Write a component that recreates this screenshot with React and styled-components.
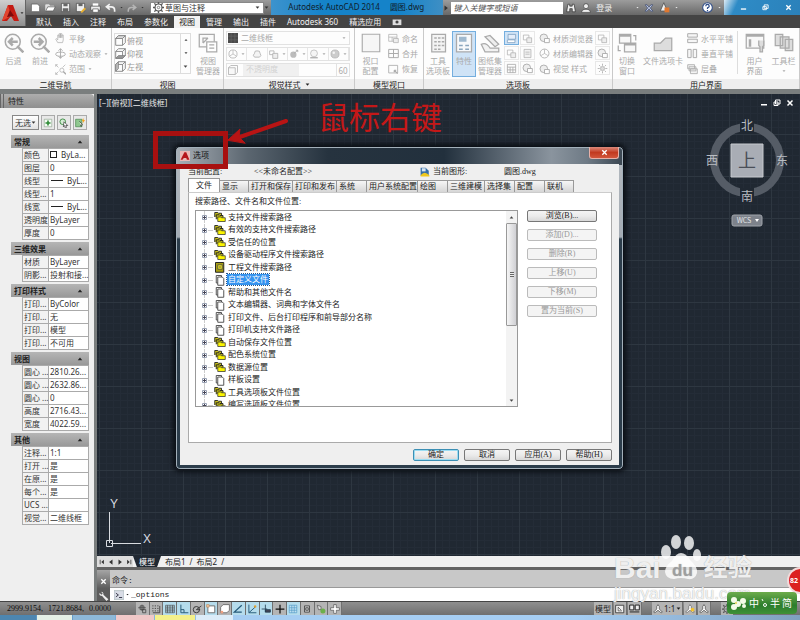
import React from 'react';
import styled, { createGlobalStyle, css } from 'styled-components';

const GlobalStyle = createGlobalStyle`
  * { box-sizing: border-box; }
  body {
    margin: 0;
    overflow: hidden;
    background: #efefef;
    font-family: "Noto Sans", "Noto Sans CJK SC", sans-serif;
    font-size: 8px;
    line-height: 10px;
    color: #333;
  }
  button, input, select {
    margin: 0;
    padding: 0;
    border: 0;
    border-radius: 0;
    background: none;
    font: inherit;
    color: inherit;
    appearance: none;
  }
  ul { margin: 0; padding: 0; list-style: none; }
  svg { display: block; flex: none; }
`;

/* ---------- icons ---------- */

const shapes = {
  new: <path d="M2 3h9l3 3v8H2z" fill="#fff" stroke="#555" />,
  open: <><path d="M1 13V4h5l1 2h6v2" fill="#ddd" stroke="#eee" /><path d="M1 13l3-6h11l-3 6z" fill="#fff" stroke="#555" /></>,
  save: <><path d="M2 2h12v12H2z" fill="#eee" stroke="#444" /><path d="M5 2h6v4H5zM4 9h8v5H4z" fill="#666" /></>,
  saveas: <><path d="M2 2h12v12H2z" fill="#eee" stroke="#444" /><path d="M5 2h6v4H5z" fill="#666" /><path d="M8 14l6-6 2 2-6 6z" fill="#e8b030" /></>,
  print: <><path d="M4 2h8v4H4z" fill="#fff" /><path d="M1 6h14v6H1z" fill="#eee" stroke="#444" /><path d="M4 10h8v5H4z" fill="#fff" stroke="#555" /></>,
  undo: <path d="M7 3L2 7l5 4M2 7h7q5 0 5 5v2" fill="none" stroke="#f2f2f2" strokeWidth="2.4" />,
  redo: <path d="M9 3l5 4-5 4M14 7H7q-5 0-5 5v2" fill="none" stroke="#b5b5b5" strokeWidth="2.4" />,
  gear: <><circle cx="8" cy="8" r="5" fill="none" stroke="#555" strokeWidth="1.5" /><circle cx="8" cy="8" r="1.8" fill="none" stroke="#555" /><path d="M8 0v3M8 13v3M0 8h3M13 8h3M2 2l2 2M12 12l2 2M14 2l-2 2M4 12l-2 2" stroke="#555" strokeWidth="2" /></>,
  binoculars: <path d="M3 2h3v3h4V2h3l2 12h-5V9H6v5H1z" fill="#eee" stroke="#222" />,
  user: <><circle cx="8" cy="5" r="4" fill="#eee" stroke="#333" /><path d="M1 15q0-5 7-5t7 5z" fill="#eee" stroke="#333" /></>,
  exchange: <path d="M2 3h3l3 4 3-4h3l-4 5 4 5h-3L8 9l-3 4H2l4-5z" fill="#d8e0f2" stroke="#26386c" />,
  alert: <><path d="M7 1l5 12H2z" fill="#eee" stroke="#444" /><path d="M8 8h7v7H8z" fill="#e07830" /></>,
  help: <><circle cx="8" cy="8" r="7" fill="#fff" stroke="#2c4a86" strokeWidth="1.5" /><path d="M5.5 6q0-2.5 2.5-2.5T10.5 6Q10.5 7.5 8 8.5v1.500M8 11.5v2" fill="none" stroke="#2c4a86" strokeWidth="1.8" /></>,
  back: <><circle cx="7" cy="7" r="6" fill="#fafafa" stroke="currentColor" strokeWidth="1.2" /><path d="M10.5 10.5l5 5" stroke="currentColor" strokeWidth="2" /><path d="M11 7H4m3-3L4 7l3 3" fill="none" stroke="currentColor" strokeWidth="2" /></>,
  forward: <><circle cx="7" cy="7" r="6" fill="#fafafa" stroke="currentColor" strokeWidth="1.2" /><path d="M10.5 10.5l5 5" stroke="currentColor" strokeWidth="2" /><path d="M3 7h7M7 4l3 3-3 3" fill="none" stroke="currentColor" strokeWidth="2" /></>,
  hand: <path d="M4 14L1 9l1-1 2 2V3h2v4-6h2v6-6h2v6-4h2v7l-1 4z" fill="#fafafa" stroke="currentColor" />,
  orbit: <><ellipse cx="8" cy="9" rx="7" ry="3" fill="none" stroke="currentColor" strokeWidth="1.3" /><path d="M8 1v14M5 4l3-3 3 3M5 12l3 3 3-3" fill="none" stroke="currentColor" strokeWidth="1.3" /></>,
  extents: <><path d="M1 1l4 4M1 4V1h3M15 1l-4 4M1 15l4-4M1 12v3h3" stroke="currentColor" fill="none" /><circle cx="10" cy="9" r="3" fill="none" stroke="currentColor" /><path d="M12 11l4 4" stroke="currentColor" strokeWidth="2" /></>,
  cubeTop: <><path d="M1 5h10v10H1zM1 5l4-4h10v10l-4 4M11 5l4-4" fill="none" stroke="#777" strokeWidth="1.2" /><path d="M1 5l4-4h10l-4 4z" fill="#ddd" stroke="#777" /></>,
  cubeBottom: <><path d="M1 5h10v10H1zM1 5l4-4h10v10l-4 4M11 5l4-4" fill="none" stroke="#777" strokeWidth="1.2" /><path d="M1 15l4-4h10l-4 4z" fill="#999" stroke="#777" /></>,
  cubeLeft: <><path d="M1 5h10v10H1zM1 5l4-4h10v10l-4 4M11 5l4-4" fill="none" stroke="#777" strokeWidth="1.2" /><path d="M1 5l4-4v10l-4 4z" fill="#bbb" stroke="#777" /></>,
  viewManager: <><path d="M1 1h12v10H1z" fill="#fafafa" stroke="currentColor" /><path d="M4 8V4h4M4 8l4-4" fill="none" stroke="currentColor" /><path d="M7 7h8v8H7z" fill="#fff" stroke="currentColor" /><path d="M9 9.5h4M9 12h4" stroke="currentColor" /></>,
  dark: <><path d="M0 0h16v16H0z" fill="#4a4a4a" /><path d="M5 0v16M11 0v16M0 5h16M0 11h16" stroke="#686868" /></>,
  globe: <><circle cx="8" cy="8" r="6.5" fill="none" stroke="currentColor" strokeWidth="1.2" /><path d="M8 8V2M8 8l5 3M8 8l-5 3" stroke="currentColor" /></>,
  cloud: <path d="M4 13q-4-3 0-6 0-5 4-4 5-1 5 4 3 4-1 6z" fill="#f4f4f4" stroke="currentColor" strokeWidth="1.2" />,
  boxes: <><path d="M1 3h7v6H1z" fill="none" stroke="currentColor" strokeWidth="1.2" /><path d="M6 7h8v8H6z" fill="#eee" stroke="currentColor" strokeWidth="1.2" /></>,
  sphere: <><circle cx="8" cy="8" r="6.5" fill="#ccc" stroke="currentColor" /><circle cx="6" cy="6" r="2" fill="#f5f5f5" /></>,
  shade: <><circle cx="8" cy="7" r="5.5" fill="#f5f5f5" stroke="currentColor" /><path d="M2 14h12" stroke="currentColor" strokeWidth="2" /></>,
  bulb: <><circle cx="7" cy="9" r="5" fill="#bbb" /><path d="M8 7l6-5M11 2h3v3" fill="none" stroke="currentColor" strokeWidth="1.4" /></>,
  cube: <><path d="M2 5h9v9H2z" fill="#f8f8f8" stroke="currentColor" /><path d="M2 5l3-3h9v9l-3 3" fill="none" stroke="currentColor" /></>,
  square: <path d="M1 1h14v14H1z" fill="#f6f6f6" stroke="currentColor" strokeWidth=".9" />,
  named: <><path d="M1 2h12v10H1zM1 6h12M6 6v6" fill="none" stroke="currentColor" /><path d="M8 8h7v6H8z" fill="#eee" stroke="currentColor" /></>,
  join: <path d="M1 2h14v12H1zM1 8h14M8 2v12" fill="none" stroke="currentColor" strokeWidth="1.4" />,
  restore: <><path d="M1 2h13v11H1z" fill="none" stroke="currentColor" strokeWidth="1.2" /><path d="M9 9l5 5M9 9v3M9 9h3" stroke="currentColor" strokeWidth="1.5" /></>,
  palette: <><path d="M3 1h11v14H3z" fill="#f4f4f4" stroke="currentColor" /><path d="M5 4h2M8 4h2M11 4h2M5 7h2M8 7h2M11 7h2M5 10h2M8 10h2M11 10h2M5 13h2M8 13h2" stroke="currentColor" strokeWidth="1.3" /></>,
  props: <><path d="M2 1h12v14H2z" fill="#f7f9fb" stroke="currentColor" /><path d="M4 3h6v4H4z" fill="#9fb9cf" /><path d="M4 10h3M9 10h3M4 13h3M9 13h3" stroke="#8aa6be" strokeWidth="1.3" /></>,
  sheets: <><path d="M4 3l8 8 3-2-7-7z" fill="#eee" stroke="currentColor" /><path d="M1 9q4-2 7 3h7v3H4z" fill="#f2f2f2" stroke="currentColor" /></>,
  command: <><path d="M3 2h11v7H3z" fill="#e4eefa" stroke="#6f93b8" /><path d="M2 10h11v4H2z" fill="#fff" stroke="#6f93b8" /></>,
  small: <><path d="M2 3h8v7H2z" fill="none" stroke="currentColor" /><path d="M7 7h7v7H7z" fill="#eee" stroke="currentColor" /></>,
  page: <><path d="M3 2h10v12H3z" fill="#f2f2f2" stroke="currentColor" /><path d="M5 6h6M5 9h6" stroke="currentColor" /></>,
  calc: <path d="M2 2h12v12H2zM2 6h12M2 10h12M6 6v8M10 6v8" fill="none" stroke="currentColor" strokeWidth="1.2" />,
  material: <><circle cx="7" cy="7" r="5.5" fill="#eee" stroke="currentColor" strokeWidth="1.3" /><path d="M8 8h7v6H8z" fill="#fff" stroke="currentColor" strokeWidth="1.3" /></>,
  sun: <><circle cx="8" cy="8" r="3" fill="#ddd" stroke="currentColor" /><path d="M8 1v3M8 12v3M1 8h3M12 8h3M3 3l2 2M11 11l2 2M13 3l-2 2M3 13l2-2" stroke="currentColor" strokeWidth="1.2" /></>,
  switchWin: <><path d="M2 1h9v7H2zM6 8h9v7H6z" fill="#f8f8f8" stroke="currentColor" /><path d="M2 2h9M6 9h9" stroke="currentColor" strokeWidth="2" /><path d="M13 2h2v4M3 14H1v-4" fill="none" stroke="currentColor" /></>,
  folderTab: <path d="M1 14V8h5l4-4h5v10z" fill="#ddd" stroke="currentColor" />,
  tileH: <path d="M1 1h14v5H1zM1 9h14v5H1z" fill="#f6f6f6" stroke="currentColor" strokeWidth="1.4" />,
  tileV: <path d="M1 2h5v12H1zM9 2h5v12H9z" fill="#f6f6f6" stroke="currentColor" strokeWidth="1.4" />,
  cascade: <path d="M1 1h10v6H1zM3 4h10v6H3zM5 7h10v7H5z" fill="#f4f4f4" stroke="currentColor" strokeWidth="1.2" />,
  uiPanel: <><path d="M1 1h14v11H1z" fill="#f8f8f8" stroke="currentColor" /><path d="M1 2h14M4 5v6" stroke="currentColor" strokeWidth="2" /><path d="M11 6v4l1 1v4h2v-4l1-1V6" fill="#ddd" stroke="currentColor" /></>,
  bars: <path d="M1 1h6v9H1zM5 3h7v9H5zM9 5h6v9H9z" fill="#ddd" stroke="currentColor" />,
  folder: <><path d="M1 8V2h4l1 1h4v4" fill="#c9c21a" stroke="#222" strokeWidth="1.2" /><path d="M3 11V5h4l1 1h4v3" fill="#b8b018" stroke="#222" strokeWidth="1.2" /><path d="M5 14V8h4l1 1h5v5z" fill="#fbf400" stroke="#333" /></>,
  book: <><path d="M2 2h11v13H2z" fill="#a89f14" stroke="#222" strokeWidth="1.3" /><path d="M5 5h6v6H5z" fill="#e9e02c" stroke="#444" /><path d="M7 8h2" stroke="#222" /></>,
  files: <><path d="M3 2h7v10H3z" fill="#fff" stroke="#444" strokeWidth="1.2" /><path d="M5 4h6l2 2v9H5z" fill="#fff" stroke="#444" strokeWidth="1.2" /></>,
  drawing: <><path d="M1 1h8l5 5v8H1z" fill="#356ea8" /><path d="M3 2h6v5H3z" fill="#d6e6f2" /><path d="M1 13q6-8 14 0v2H1z" fill="#f0c81c" /></>,
  logo: <><path d="M0 0h16v16H0z" fill="#e9b9b6" /><path d="M7 2h3l5 12h-4l-1-3H6l-2 3H1z" fill="#b5151a" /></>,
  plusPick: <><path d="M2 2h12v12H2z" fill="#f4fbf4" stroke="#8ba08b" /><path d="M8 4v8M4 8h8" stroke="#2c8a34" strokeWidth="2.5" /></>,
  select: <><circle cx="6" cy="6" r="4.5" fill="#d4ecd4" stroke="#3d8d44" strokeWidth="1.5" /><path d="M8 6l6 6h-3l1 3-2 1-1-4-2 2z" fill="#fff" stroke="#222" /></>,
  quick: <><path d="M1 2h10v12H1z" fill="#90c890" stroke="#3d7d44" /><path d="M7 5l5 6h-3l1 3" fill="#fff" stroke="#222" /><path d="M13 0l-2 5h2l-1 4 4-6h-2z" fill="#f4a51c" /></>,
  infer: <path d="M8 1v10M2 6h12M5 3h6v6H5zM9 9h5v5H9z" fill="none" stroke="#444" strokeWidth="1.3" />,
  snap: <path d="M2 3h2M6 3h2M10 3h2M2 7h2M6 7h2M10 7h2M2 11h2M6 11h2M10 11h2M14 3v11H3" fill="none" stroke="#444" strokeWidth="1.5" />,
  grid: <path d="M1 2h14v12H1zM1 5h14M1 8h14M1 11h14M4 2v12M8 2v12M12 2v12" fill="none" stroke="#444" />,
  ortho: <path d="M3 1v13h12M3 9h5v5" fill="none" stroke="#2d5f7c" strokeWidth="1.6" />,
  polar: <><circle cx="7" cy="9" r="5" fill="none" stroke="#333" strokeWidth="1.5" /><path d="M7 9l8-6M7 9h6" stroke="#333" strokeWidth="1.4" /></>,
  osnap: <><path d="M3 3h11v11H3z" fill="#fff" stroke="#666" strokeWidth="1.4" /><path d="M1 1h4v4H1z" fill="#f6caa8" stroke="#b85" /></>,
  osnap3d: <><path d="M5 1h10v9l-4 4H1V5z" fill="#fff" stroke="#555" strokeWidth="1.2" /><path d="M1 11h4v4H1z" fill="#f0a080" /></>,
  angle: <path d="M14 2L2 13h12" fill="none" stroke="#245a7a" strokeWidth="2" />,
  ducs: <><path d="M3 1v13h12M3 14l10-9" fill="none" stroke="#245a7a" strokeWidth="1.5" /><circle cx="13" cy="4" r="2" fill="#e0a030" /></>,
  dyn: <path d="M7 1v12M1 8h9M7 9h8v4H7z" fill="#445" stroke="#223c50" strokeWidth="1.3" />,
  plus: <path d="M8 1v14M1 8h14" stroke="#111" strokeWidth="2" />,
  transparent: <path d="M2 2h12v12H2zM2 6h12M2 10h12M6 2v12M10 2v12" fill="#bfe0f2" stroke="#4c96c4" />,
  quickProps: <path d="M4 3h8v10H4zM6 6h4v4H6z" fill="#ccc" stroke="#333" strokeWidth="1.2" />,
  cycle: <><path d="M2 2l6 2v5H4z" fill="#ddd" stroke="#444" /><circle cx="11" cy="11" r="4" fill="#6bb04a" /></>,
  monitor: <path d="M6 1h4v5h5v4h-5v5H6v-5H1V6h5z" fill="#fff" stroke="#444" />,
  layout: <><path d="M1 2h13v12H1z" fill="#eee" stroke="#333" strokeWidth="1.3" /><path d="M5 5v6h6M5 5l5 5" stroke="#333" fill="none" /></>,
  views: <path d="M1 3h6v7H1zM9 3h6v7H9zM1 13h14" fill="#eee" stroke="#222" strokeWidth="1.4" />,
  person: <path d="M8 1l2 3v4l5 5-2 1-5-4-5 4-2-1 5-5V4z" fill="#fff" stroke="#333" />,
  personSun: <><path d="M8 1l2 3v4l5 5-2 1-5-4-5 4-2-1 5-5V4z" fill="#fff" stroke="#555" /><circle cx="12" cy="9" r="3" fill="#f0c030" /></>,
  wrench: <path d="M3 1l3 3-2 2-3-3q-2 5 4 5l7 8 3-3-8-7q1-5-4-5z" fill="#eee" />,
  prompt: <><path d="M0 1h16v14H0z" fill="#d9dde6" stroke="#9aa" /><path d="M3 5l4 3-4 3M8 12h5" fill="none" stroke="#334" strokeWidth="1.5" /></>,
  min: <path d="M2 10h12v3H2z" fill="#fff" />,
  max: <path d="M5 2h9v8H5zM2 6h8v7H2z" fill="none" stroke="#fff" strokeWidth="2" />,
  close: <path d="M3 3l10 10M13 3L3 13" stroke="#fff" strokeWidth="3" />,
  record: <><path d="M1 4h14v9H1z" fill="#ddd" /><circle cx="8" cy="8" r="2.5" fill="#444" /></>,
  caret: <path d="M2 5h12l-6 7z" fill="currentColor" />,
  caretUp: <path d="M2 11h12L8 4z" fill="currentColor" />,
  caretRight: <path d="M4 1v14l9-7z" fill="currentColor" />,
  caretLeft: <path d="M12 1v14L3 8z" fill="currentColor" />,
  first: <path d="M13 2v12L6 8zM2 2h2v12H2z" fill="currentColor" />,
  last: <path d="M3 2v12l7-6zM12 2h2v12h-2z" fill="currentColor" />,
};

const Icon = ({ name, size = 10 }) => (
  <svg width={size} height={size} viewBox="0 0 16 16" aria-hidden="true">{shapes[name]}</svg>
);

/* ---------- page ---------- */

const Page = styled.div`
  position: relative;
  display: flex;
  flex-direction: column;
  height: 100vh;
  overflow: hidden;
  white-space: nowrap;
`;

const Header = styled.header`
  position: relative;
  background: #444;
`;

const TitleBar = styled.div`
  display: flex;
  align-items: center;
  height: 15px;
  padding-left: 30px;
  background: linear-gradient(#9c9c9c, #686868);
`;

const AppButton = styled.button`
  position: absolute;
  left: 0;
  top: 0;
  z-index: 2;
  display: flex;
  align-items: center;
  gap: 1px;
  width: 26px;
  height: 26px;
  padding-left: 2px;
  background: linear-gradient(#d0d0d0, #8e8e8e);
  border-right: 1px solid #666;
`;

const QuickBar = styled.div`
  display: flex;
  align-items: center;
  justify-content: space-between;
  width: 116px;
  padding-right: 2px;
  color: #333;
`;

const ToolButton = styled.button`
  display: flex;
  align-items: center;
`;

const WorkspaceBox = styled.label`
  display: flex;
  align-items: center;
  gap: 1px;
  width: 114px;
  height: 12px;
  padding: 0 3px 0 2px;
  margin-left: 4px;
  background: #fff;
  border: 1px solid #888;
`;

const FlatSelect = styled.select`
  flex: 1;
  min-width: 0;
  height: 10px;
  line-height: 10px;
`;

const DocTitle = styled.div`
  flex: 174 1 0;
  display: flex;
  justify-content: center;
  gap: 10px;
  height: 15px;
  margin-left: 2px;
  padding-right: 2px;
  line-height: 14px;
  color: #10202c;
  background: linear-gradient(90deg, #3d93cd, #1583c9 30%, #1583c9 75%, #3f8fc4);
`;

const SearchInput = styled.input`
  flex: 112 1 0;
  min-width: 0;
  height: 12px;
  padding-left: 2px;
  background: #fff;
  font-style: italic;
  margin-left: 2px;
  &::placeholder { color: #555; opacity: 1; }
`;

const AccountBar = styled.div`
  flex: 158 1 0;
  display: flex;
  align-items: center;
  gap: 5px;
  padding: 0 3px;
  color: #eee;
`;

const Spacer = styled.span`
  flex: 1;
`;

const WindowButtons = styled.div`
  display: flex;
  justify-content: space-around;
  align-items: center;
  width: 76px;
  height: 15px;
  padding-left: 8px;
  background: linear-gradient(115deg, #dbeaf4, #2e8bc6 18%, #2b81ba);
`;

const Menu = styled.nav`
  display: flex;
  align-items: flex-end;
  gap: 1px;
  height: 13px;
  padding-left: 31px;
  color: #f2f2f2;
`;

const MenuTab = styled.button`
  height: 12px;
  padding: 0 5px;
  line-height: 12px;
  ${({ $active }) => $active && css`
    color: #222;
    background: #f2f2f2;
  `}
`;

/* ---------- ribbon ---------- */

const Ribbon = styled.div`
  display: grid;
  grid-template-columns: 112fr 112fr 131fr 69fr 189fr 187fr;
  height: 61px;
  background: #fdfdfd;
`;

const Panel = styled.section`
  display: flex;
  flex-direction: column;
  min-width: 0;
  border-right: 1px solid #c9c9c9;
`;

const PanelBody = styled.div`
  flex: 1;
  display: flex;
  gap: ${({ $tight }) => ($tight ? 2 : 4)}px;
  padding: 3px 2px 2px;
  color: #aaa;
  overflow: hidden;
`;

const PanelTitle = styled.h2`
  display: flex;
  justify-content: center;
  align-items: center;
  gap: 4px;
  height: 12px;
  margin: 0;
  font-size: 8px;
  font-weight: 400;
  line-height: 11px;
  color: #222;
  background: #eee;
  border-bottom: 1px solid #ccc;
`;

const BigButton = styled.button`
  display: flex;
  flex-direction: column;
  align-items: center;
  flex: none;
  gap: 3px;
  width: ${({ $w }) => $w || 24}px;
  padding-top: 2px;
  ${({ $active }) => $active && css`
    background: #cfe3f6;
    outline: 1px solid #74aede;
    outline-offset: -1px;
  `}
`;

const IconColumn = styled.div`
  display: flex;
  flex-direction: column;
  justify-content: space-around;
  flex: none;
`;

const RowButton = styled.button`
  display: flex;
  align-items: center;
  gap: 3px;
  height: 14px;
`;

const ViewList = styled.div`
  flex: 1;
  display: flex;
  height: 41px;
  margin-top: 2px;
  border: 1px solid #ddd;
  color: #999;
`;

const ViewItems = styled.ul`
  flex: 1;
  display: flex;
  flex-direction: column;
  justify-content: space-around;

  ${RowButton} { height: 13px; gap: 1px; }
`;

const ViewScroll = styled.div`
  display: flex;
  flex-direction: column;
  justify-content: space-around;
  align-items: center;
  width: 10px;
  border-left: 1px solid #ddd;
  color: #444;
`;

const StyleTools = styled.div`
  flex: 1;
  display: flex;
  flex-direction: column;
  gap: 2px;
  padding-right: 2px;
`;

const StyleRow = styled.div`
  display: flex;
  align-items: center;
  height: 14px;
  border: 1px solid #e2e2e2;
`;

const StyleSelect = styled(StyleRow).attrs({ as: 'label' })`
  gap: 3px;
  padding: 0 3px 0 1px;
`;

const StyleButton = styled.button`
  flex: 1;
  display: flex;
  align-items: center;
  justify-content: center;
  gap: 3px;
  height: 12px;
  border-right: 1px solid #e6e6e6;
`;

const OpacityLabel = styled.label`
  flex: 1;
  height: 12px;
  margin-left: 4px;
  padding-left: 3px;
  color: #d2d2d2;
  background: linear-gradient(90deg, #f0f0f0 60%, #fdfdfd 60%);
`;

const OpacityInput = styled.input`
  width: 13px;
  height: 12px;
  border-left: 1px solid #e2e2e2;
  text-align: center;
`;

const SmallGrid = styled.div`
  display: grid;
  grid-template-columns: repeat(${({ $cols }) => $cols}, 15px);
  grid-template-rows: repeat(3, 14px);
  gap: 1px;
  flex: none;
`;

const SmallButton = styled.button`
  display: flex;
  align-items: center;
  justify-content: center;
  border: 1px solid ${({ $active }) => ($active ? '#74aede' : '#e8e8e8')};
  background: ${({ $active }) => ($active ? '#cfe3f6' : 'transparent')};
`;

const Divider = styled.span`
  width: 1px;
  height: 43px;
  background: #ddd;
`;

/* ---------- properties palette ---------- */

const Body = styled.div`
  flex: 1;
  display: flex;
  min-height: 0;
  border-top: 5px solid #7a7e7e;
  background: #7a7e7e;
`;

const Palette = styled.aside`
  width: 94px;
  flex: none;
  margin-right: 3px;
  background: #efefef;
  overflow: hidden;
`;

const PaletteTitle = styled.h2`
  height: 14px;
  margin: 0;
  padding-left: 4px;
  font-size: 8px;
  font-weight: 400;
  line-height: 14px;
  color: #222;
  background: linear-gradient(#adadad, #8f8f8f);
  border-left: 4px double #666;
  border-radius: 0 4px 0 0;
`;

const PaletteTools = styled.div`
  display: flex;
  gap: 2px;
  padding: 7px 6px 5px 12px;
`;

const ObjectSelect = styled.label`
  display: flex;
  align-items: center;
  width: 27px;
  height: 15px;
  padding: 0 2px;
  background: linear-gradient(#fff, #e2e2e2);
  border: 1px solid #888;
`;

const PickButton = styled.button`
  display: flex;
  align-items: center;
  justify-content: center;
  width: 14px;
  height: 15px;
  background: #e8e8e8;
  border: 1px solid #aaa;
`;

const Group = styled.section`
  margin: 0 5px 2px 11px;
`;

const GroupTitle = styled.h3`
  display: flex;
  align-items: center;
  justify-content: space-between;
  height: 13px;
  margin: 0;
  padding: 0 6px 0 3px;
  font-size: 8px;
  font-weight: 700;
  color: #222;
  background: linear-gradient(#b5b5b5, #999);
`;

const PropTable = styled.table`
  width: 67px;
  margin-left: 11px;
  table-layout: fixed;
  border-collapse: collapse;
  background: #fff;

  th, td {
    height: 13px;
    padding: 0 0 0 1px;
    border: 1px solid #aaa;
    font-weight: 400;
    text-align: left;
    line-height: 10px;
  }
  th { width: 26px; background: #f2f2f2; }
`;

const Swatch = styled.span`
  display: inline-block;
  width: 7px;
  height: 7px;
  margin-right: 4px;
  border: 1px solid #222;
`;

const LineSample = styled.span`
  display: inline-block;
  width: 12px;
  height: 1px;
  margin: 0 4px 3px 1px;
  background: #222;
`;

/* ---------- drawing area ---------- */

const Main = styled.main`
  flex: 1;
  display: flex;
  flex-direction: column;
  min-width: 0;
`;

const Canvas = styled.div`
  position: relative;
  flex: 1;
  min-height: 0;
  background-color: #202832;
  background-image:
    linear-gradient(90deg, #2e3741 1px, transparent 1px),
    linear-gradient(#2e3741 1px, transparent 1px),
    linear-gradient(90deg, #242c37 1px, transparent 1px),
    linear-gradient(#242c37 1px, transparent 1px);
  background-size: 42px 42px, 42px 42px, 7px 7px, 7px 7px;
  background-position: 2px 40px;
`;

const ViewportLabel = styled.div`
  position: absolute;
  left: 2px;
  top: 4px;
  color: #e8e8e8;
`;

const ViewportButtons = styled.div`
  position: absolute;
  right: 6px;
  top: 5px;
  display: flex;
  gap: 5px;
`;

const CubeWrap = styled.div`
  position: absolute;
  right: 8px;
  top: 22px;
`;

const UcsWrap = styled.div`
  position: absolute;
  left: 8px;
  bottom: 7px;
`;

/* ---------- options dialog ---------- */

const Dialog = styled.div`
  position: absolute;
  left: 78px;
  top: 52px;
  width: 449px;
  padding: 0 4px 4px;
  border: 1px solid #0c1118;
  border-radius: 5px;
  background:
    linear-gradient(90deg, #a9b0b7, #5b6670 16%, #26333f 34%, #22303d 60%, #8a949e 84%, #6e7a85 92%, #3a4651) 0 0 / 100% 18px no-repeat,
    linear-gradient(#b4bac0 0, #a4abb3 90px, #2c3d4b 92px, #2c3d4b);
  box-shadow: inset 0 0 0 1px #a3b0ba, 0 0 5px 2px #0a0e14;
  color: #222;
  font-family: "Liberation Serif", "Noto Sans CJK SC", sans-serif;
`;

const DialogTitle = styled.div`
  display: flex;
  align-items: flex-start;
  justify-content: space-between;
  height: 17px;
`;

const DialogName = styled.h1`
  display: flex;
  align-items: center;
  gap: 3px;
  height: 17px;
  margin: 0;
  font-size: 8px;
  font-weight: 400;
  color: #111;
`;

const CloseButton = styled.button`
  display: flex;
  align-items: center;
  justify-content: center;
  width: 30px;
  height: 12px;
  border: 1px solid #e7b1a8;
  border-top: 0;
  border-radius: 0 0 3px 3px;
  background: linear-gradient(#dc8a7c, #c23a20 50%, #d2563c);
`;

const Client = styled.div`
  padding: 1px 7px 4px 8px;
  background: #efefef;
`;

const ProfileRow = styled.div`
  display: grid;
  grid-template-columns: 66px 166px 13px 71px 1fr;
  align-items: center;
  height: 13px;
`;

const TabList = styled.div`
  display: flex;
  align-items: flex-end;
  height: 14px;
`;

const TabButton = styled.button`
  width: ${({ $w }) => $w}px;
  height: 12px;
  padding-left: 2px;
  text-align: left;
  background: linear-gradient(#f6f6f6, #d6d6d6);
  border: 1px solid #999;
  border-left-width: 0;
  border-bottom: 0;
  ${({ $active }) => $active && css`
    height: 14px;
    padding-left: 7px;
    background: #fff;
    border-left-width: 1px;
  `}
`;

const TabPage = styled.div`
  display: grid;
  grid-template-columns: 323px 70px;
  column-gap: 9px;
  align-content: start;
  height: 251px;
  padding: 4px 6px;
  background: #fff;
  border: 1px solid #aaa;
  border-top-color: #ccc;
`;

const TreeLabel = styled.div`
  grid-column: 1 / -1;
  height: 13px;
`;

const TreeBox = styled.div`
  display: flex;
  height: 197px;
  border: 1px solid #999;
  overflow: hidden;
`;

/* sixteen equal rows; the last one runs out of the box */
const Tree = styled.ul`
  flex: 1;
  display: grid;
  grid-auto-rows: 1fr;
  height: 200px;
  padding-left: 5px;
`;

const TreeRow = styled.li`
  display: flex;
  align-items: center;
  gap: 1px;
`;

const TreeText = styled.span`
  padding: 0 1px;
  line-height: 11px;
  ${({ $active }) => $active && css`
    color: #fff;
    background: #3593ef;
    outline: 1px dotted #26588c;
  `}
`;

const ScrollBar = styled.div`
  display: flex;
  flex-direction: column;
  width: 11px;
  background: #f3f3f3;
  color: #444;
`;

const ScrollArrow = styled.button`
  display: flex;
  align-items: center;
  justify-content: center;
  height: 12px;
`;

const Thumb = styled.div`
  display: flex;
  align-items: center;
  justify-content: center;
  height: 103px;
  background: linear-gradient(90deg, #f5f5f5, #d0d0d4);
  border: 1px solid #999;
  border-radius: 1px;
`;

const Grip = styled.span`
  width: 4px;
  height: 5px;
  background: repeating-linear-gradient(#666 0 1px, #eee 1px 2px);
`;

const ButtonStack = styled.div`
  display: flex;
  flex-direction: column;
  gap: 7px;
`;

const DialogButton = styled.button`
  width: ${({ $wide }) => ($wide ? 70 : 46)}px;
  height: 12px;
  line-height: 10px;
  text-align: center;
  color: #222;
  background: linear-gradient(#f4f4f4, #ebebeb 50%, #d8d8d8);
  border: 1px solid #777;
  border-radius: 2px;
  ${({ $primary }) => $primary && css`
    border-color: #3c8fb4;
    box-shadow: inset 0 0 0 1px #9bdcf2;
  `}
  &:disabled {
    color: #999;
    background: #f4f4f4;
    border-color: #bbb;
  }
`;

const DialogFooter = styled.div`
  display: flex;
  justify-content: flex-end;
  gap: 5px;
  padding-top: 6px;
`;

/* ---------- annotations ---------- */

const RedBox = styled.div`
  position: absolute;
  left: 56px;
  top: 37px;
  width: 75px;
  height: 38px;
  border: 5px solid #a81010;
`;

const RedText = styled.div`
  position: absolute;
  left: 221px;
  top: 3px;
  font-size: 31px;
  line-height: 40px;
  color: #c41818;
`;

const ArrowWrap = styled.div`
  position: absolute;
  left: 130px;
  top: 24px;
`;

/* ---------- bottom bars ---------- */

const LayoutTabs = styled.div`
  display: flex;
  align-items: center;
  height: 11px;
  color: #333;
  background: #f0f0f0;
`;

const NavGroup = styled.div`
  display: flex;
  justify-content: space-around;
  align-items: center;
  width: 36px;
  height: 11px;
  background: #ddd;
`;

const LayoutTab = styled.button`
  height: 11px;
  padding: 0 4px;
  line-height: 10px;
  color: ${({ $active }) => ($active ? '#fff' : '#222')};
  ${({ $active }) => $active && css`
    padding: 0 6px;
    background: #202832;
    clip-path: polygon(0 0, 100% 0, 86% 100%, 14% 100%);
  `}
`;

const CommandArea = styled.div`
  display: flex;
  height: 34px;
  border-top: 3px solid #636363;
  background: #c8c8c8;
`;

const CommandSide = styled.div`
  display: flex;
  flex-direction: column;
  align-items: center;
  justify-content: flex-end;
  gap: 6px;
  width: 13px;
  background: linear-gradient(#a5a5a5, #5c5c5c 60%);
`;

const CommandLines = styled.div`
  flex: 1;
  display: flex;
  flex-direction: column;
  font-family: "Liberation Mono", "Noto Sans CJK SC", monospace;
  color: #222;
`;

const History = styled.div`
  flex: 1;
  padding: 6px 2px 0;
`;

const CommandLine = styled.label`
  display: flex;
  align-items: center;
  gap: 2px;
  height: 14px;
  padding-left: 4px;
  background: #fff;
  border-top: 1px solid #999;
`;

const CommandInput = styled.input`
  flex: 1;
  height: 12px;
`;

const StatusBar = styled.footer`
  display: flex;
  align-items: center;
  height: 14px;
  background: linear-gradient(#8f8f8f, #6f6f6f);
  border-top: 1px solid #444;
  color: #1c1c1c;
`;

const Coords = styled.div`
  display: flex;
  gap: 5px;
  width: 136px;
  padding-left: 7px;
  font-family: "Liberation Serif", serif;
  color: #0c0c0c;
`;

const StatusGroup = styled.div`
  display: grid;
  grid-template-columns: repeat(15, 1fr);
  width: 206px;
  height: 13px;
`;

const StatusButton = styled.button`
  display: flex;
  align-items: center;
  justify-content: center;
  height: 13px;
  padding: 0 1px;
  gap: 1px;
  background: ${({ $active }) => ($active ? '#b5dcec' : '#b4b4b4')};
  border-right: 1px solid #707070;
`;

const StatusRight = styled.div`
  display: flex;
  width: 206px;
  gap: 1px;
`;

const StatusGap = styled.span`
  width: 8px;
`;

const TaskBar = styled.div`
  display: grid;
  grid-template-columns: 36fr 36fr 42fr 38fr 40fr 38fr 570fr;
  gap: 1px;
  height: 5px;
  background: linear-gradient(90deg, #4f8ab8, #a5cdf2 30%, #a5cdf2 72%, #7fa0c0);
`;

const Task = styled.span`
  background: ${({ $c }) => $c};
`;

/* ---------- floating things ---------- */

const Brand = styled.div`
  position: absolute;
  right: 43px;
  bottom: 16px;
  width: 143px;
  color: rgba(255, 255, 255, 0.85);
  font-family: "Liberation Sans", "Noto Sans CJK SC", sans-serif;
  text-shadow: 0 0 1px #999;
`;

const BrandRow = styled.div`
  display: flex;
  align-items: flex-end;
  height: 50px;
  font-size: 30px;
  font-weight: 700;
  line-height: 32px;
`;

const BrandTail = styled.span`
  margin-left: 3px;
  font-size: 24px;
`;

const BrandUrl = styled.div`
  font-size: 17px;
  line-height: 20px;
`;

const ImeBar = styled.div`
  position: absolute;
  right: 3px;
  bottom: 6px;
  display: flex;
  align-items: center;
  justify-content: space-between;
  width: 70px;
  height: 22px;
  padding: 0 5px 0 3px;
  border-radius: 4px;
  color: #fff;
  font-family: "Noto Sans CJK SC", sans-serif;
  font-size: 10px;
  line-height: 20px;
  background: linear-gradient(#6dac4c, #2b7d2c 60%, #3f9138);
`;

const Badge = styled.div`
  position: absolute;
  right: -14px;
  bottom: 26px;
  width: 27px;
  height: 27px;
  padding-left: 1px;
  border: 2px solid #f2dada;
  border-radius: 50%;
  color: #fff;
  font-size: 7px;
  font-weight: 700;
  line-height: 23px;
  background: #dc2020;
`;

/* ---------- data ---------- */

const menuItems = ['默认', '插入', '注释', '布局', '参数化', '视图', '管理', '输出', '插件', 'Autodesk 360', '精选应用'];

const groups = [
  { title: '常规', rows: [['颜色', <><Swatch />ByLa...</>], ['图层', '0'], ['线型', <><LineSample />ByL...</>], ['线型...', '1'], ['线宽', <><LineSample />ByL...</>], ['透明度', 'ByLayer'], ['厚度', '0']] },
  { title: '三维效果', rows: [['材质', 'ByLayer'], ['阴影...', '投射和接...']] },
  { title: '打印样式', rows: [['打印...', 'ByColor'], ['打印...', '无'], ['打印...', '模型'], ['打印...', '不可用']] },
  { title: '视图', rows: [['圆心 ...', '2810.26...'], ['圆心 ...', '2632.86...'], ['圆心 ...', '0'], ['高度', '2716.43...'], ['宽度', '4022.59...']] },
  { title: '其他', rows: [['注释...', '1:1'], ['打开 ...', '是'], ['在原...', '是'], ['每个...', '是'], ['UCS ...', ''], ['视觉...', '二维线框']] },
];

const dialogTabs = [
  ['文件', 32], ['显示', 29], ['打开和保存', 44], ['打印和发布', 44], ['系统', 30], ['用户系统配置', 51],
  ['绘图', 30], ['三维建模', 37], ['选择集', 30], ['配置', 30], ['联机', 29],
];

const treeItems = [
  ['folder', '支持文件搜索路径'],
  ['folder', '有效的支持文件搜索路径'],
  ['folder', '受信任的位置'],
  ['folder', '设备驱动程序文件搜索路径'],
  ['book', '工程文件搜索路径'],
  ['files', '自定义文件'],
  ['files', '帮助和其他文件名'],
  ['files', '文本编辑器、词典和字体文件名'],
  ['files', '打印文件、后台打印程序和前导部分名称'],
  ['files', '打印机支持文件路径'],
  ['folder', '自动保存文件位置'],
  ['folder', '配色系统位置'],
  ['folder', '数据源位置'],
  ['files', '样板设置'],
  ['folder', '工具选项板文件位置'],
  ['folder', '编写选项板文件位置'],
];

const sideButtons = ['浏览(B)...', '添加(D)...', '删除(R)', '上移(U)', '下移(M)', '置为当前(S)'];

const statusIcons = [
  ['infer', 0], ['snap', 0], ['grid', 1], ['ortho', 1], ['polar', 0], ['osnap', 1], ['osnap3d', 0], ['angle', 1],
  ['ducs', 1], ['dyn', 1], ['plus', 0], ['transparent', 1], ['quickProps', 0], ['cycle', 0], ['monitor', 0],
];

/* ---------- sections ---------- */

const TopBar = () => (
  <Header>
    <AppButton aria-label="A">
      <svg width="17" height="19" viewBox="0 0 17 19" aria-hidden="true">
        <path d="M6 1h5l6 16h-5L9 12l-4 5H0z" fill="#c41c14" />
        <path d="M6 1l3 11-9 5z" fill="#e2442e" />
        <path d="M8 6l4 6-7 1z" fill="#7d0b0b" />
      </svg>
      <Icon name="caret" size={4} />
    </AppButton>
    <TitleBar>
      <QuickBar>
        {['new', 'open', 'save', 'saveas', 'print', 'undo'].map((n) => (
          <ToolButton key={n} aria-label={n}><Icon name={n} size={11} /></ToolButton>
        ))}
        <Icon name="caret" size={3} />
        <ToolButton aria-label="redo"><Icon name="redo" /></ToolButton>
        <Icon name="caret" size={3} />
      </QuickBar>
      <WorkspaceBox>
        <Icon name="gear" size={11} />
        <FlatSelect aria-label="工作空间"><option>草图与注释</option></FlatSelect>
        <Icon name="caret" size={5} />
      </WorkspaceBox>
      <Icon name="caret" size={5} />
      <DocTitle><span>Autodesk AutoCAD 2014</span><span>圆图.dwg</span></DocTitle>
      <Icon name="caretRight" size={6} />
      <SearchInput aria-label="搜索" placeholder="键入关键字或短语" />
      <AccountBar>
        <Icon name="binoculars" />
        <Icon name="user" />
        <span>登录</span>
        <Spacer />
        <Icon name="caret" size={3} />
        <Icon name="exchange" />
        <Icon name="alert" size={11} />
        <Icon name="caret" size={3} />
        <Spacer />
        <Icon name="help" size={11} />
        <Icon name="caret" size={3} />
      </AccountBar>
      <WindowButtons>
        {['min', 'max', 'close'].map((n) => (
          <ToolButton key={n} aria-label={n}><Icon name={n} size={7} /></ToolButton>
        ))}
      </WindowButtons>
    </TitleBar>
    <Menu>
      {menuItems.map((m) => <MenuTab key={m} $active={m === '视图'}>{m}</MenuTab>)}
      <MenuTab aria-label="record"><Icon name="record" /></MenuTab>
    </Menu>
  </Header>
);

const Rows = ({ items }) => (
  <IconColumn>
    {items.map(([icon, text, caret]) => (
      <RowButton key={text}>
        <Icon name={icon} size={11} />{text}{caret && <Icon name="caret" size={4} />}
      </RowButton>
    ))}
  </IconColumn>
);

const Big = ({ icon, size = 20, lines, w, active, caret }) => (
  <BigButton $w={w} $active={active}>
    <Icon name={icon} size={size} />
    <span>{lines.map((l) => <div key={l}>{l}</div>)}</span>
    {caret && <Icon name="caret" size={4} />}
  </BigButton>
);

const RibbonBar = () => (
  <Ribbon>
    <Panel>
      <PanelBody>
        <Big icon="back" lines={['后退']} w={23} />
        <Big icon="forward" lines={['前进']} w={22} />
        <Rows items={[['hand', '平移'], ['orbit', '动态观察', 1], ['extents', '范围', 1]]} />
      </PanelBody>
      <PanelTitle>二维导航</PanelTitle>
    </Panel>
    <Panel>
      <PanelBody>
        <ViewList>
          <ViewItems>
            {[['cubeTop', '俯视'], ['cubeBottom', '仰视'], ['cubeLeft', '左视']].map(([i, t]) => (
              <li key={t}><RowButton><Icon name={i} size={11} />{t}</RowButton></li>
            ))}
          </ViewItems>
          <ViewScroll>
            <Icon name="caretUp" size={4} />
            <Icon name="caret" size={4} />
            <Icon name="caret" size={5} />
          </ViewScroll>
        </ViewList>
        <Big icon="viewManager" lines={['视图', '管理器']} w={26} />
      </PanelBody>
      <PanelTitle>视图</PanelTitle>
    </Panel>
    <Panel>
      <PanelBody>
        <StyleTools>
          <StyleSelect>
            <Icon name="dark" />
            <FlatSelect aria-label="视觉样式"><option>二维线框</option></FlatSelect>
            <Icon name="caret" size={4} />
          </StyleSelect>
          <StyleRow>
            {['globe', 'cloud', 'boxes', 'bulb', 'shade', 'sphere'].map((n) => (
              <StyleButton key={n} aria-label={n}>
                <Icon name={n} />{n !== 'cloud' && <Icon name="caret" size={4} />}
              </StyleButton>
            ))}
          </StyleRow>
          <StyleRow>
            <Icon name="cube" size={12} />
            <OpacityLabel htmlFor="opacity">不透明度</OpacityLabel>
            <OpacityInput id="opacity" defaultValue="60" />
          </StyleRow>
        </StyleTools>
      </PanelBody>
      <PanelTitle>视觉样式 <Icon name="caret" size={5} /></PanelTitle>
    </Panel>
    <Panel>
      <PanelBody>
        <Big icon="square" lines={['视口', '配置']} w={27} />
        <Rows items={[['named', '命名'], ['join', '合并'], ['restore', '恢复']]} />
      </PanelBody>
      <PanelTitle>模型视口</PanelTitle>
    </Panel>
    <Panel>
      <PanelBody $tight>
        <Big icon="palette" lines={['工具', '选项板']} />
        <Big icon="props" lines={['特性']} active />
        <Big icon="sheets" lines={['图纸集', '管理器']} />
        <SmallGrid $cols={2}>
          {['command', 'small', 'small', 'page', 'calc', 'material'].map((n, i) => (
            <SmallButton key={i} $active={i === 0} aria-label={n}><Icon name={n} size={11} /></SmallButton>
          ))}
        </SmallGrid>
        <Divider />
        <Rows items={[['material', '材质浏览器'], ['globe', '材质编辑器'], ['material', '视觉 样式']]} />
        <SmallGrid $cols={1}>
          {['small', 'material', 'sun'].map((n) => (
            <SmallButton key={n} aria-label={n}><Icon name={n} size={11} /></SmallButton>
          ))}
        </SmallGrid>
      </PanelBody>
      <PanelTitle>选项板</PanelTitle>
    </Panel>
    <Panel>
      <PanelBody>
        <Big icon="switchWin" lines={['切换', '窗口']} />
        <Big icon="folderTab" lines={['文件选项卡']} w={40} />
        <Rows items={[['tileH', '水平平铺'], ['tileV', '垂直平铺'], ['cascade', '层叠']]} />
        <Divider />
        <Big icon="uiPanel" lines={['用户', '界面']} w={25} />
        <Big icon="bars" lines={['工具栏']} w={25} caret />
      </PanelBody>
      <PanelTitle>用户界面</PanelTitle>
    </Panel>
  </Ribbon>
);

const PropertiesPalette = () => (
  <Palette>
    <PaletteTitle>特性</PaletteTitle>
    <PaletteTools>
      <ObjectSelect>
        <FlatSelect aria-label="选择"><option>无选择</option></FlatSelect>
        <Icon name="caret" size={5} />
      </ObjectSelect>
      {['plusPick', 'select', 'quick'].map((n) => (
        <PickButton key={n} aria-label={n}><Icon name={n} /></PickButton>
      ))}
    </PaletteTools>
    {groups.map((g) => (
      <Group key={g.title}>
        <GroupTitle>{g.title}<Icon name="caretUp" size={6} /></GroupTitle>
        <PropTable>
          <tbody>
            {g.rows.map(([k, v], i) => <tr key={i}><th scope="row">{k}</th><td>{v}</td></tr>)}
          </tbody>
        </PropTable>
      </Group>
    ))}
  </Palette>
);

const ViewCube = () => (
  <CubeWrap>
    <svg width="90" height="112" viewBox="0 0 90 112" fontFamily="Noto Sans CJK SC, sans-serif" textAnchor="middle">
      <circle cx="45" cy="44" r="33" fill="none" stroke="#555c66" strokeWidth="8" />
      <path d="M38 4h14v14H38zM38 72h14v14H38z" fill="#202832" />
      <path d="M29 28h32v33H29z" fill="#a9adb5" stroke="#c6c9ce" />
      <text x="45" y="51" fontSize="18" fill="#4a4f58">上</text>
      <g fontSize="12" fill="#b9bdc3">
        <text x="45" y="14">北</text>
        <text x="45" y="85">南</text>
        <text x="10" y="49">西</text>
        <text x="80" y="49">东</text>
      </g>
      <rect x="30" y="99" width="30" height="11" rx="2" fill="#7d828b" stroke="#a0a4ab" />
      <text x="42" y="107" fontSize="7" fill="#e2e4e7">WCS</text>
      <path d="M53 103h4l-2 3z" fill="#fff" />
    </svg>
  </CubeWrap>
);

const UcsIcon = () => (
  <UcsWrap>
    <svg width="50" height="52" viewBox="0 0 50 52" fill="none" stroke="#d8dbe0">
      <path d="M4.5 15v31M6 46.5h30M1.5 43.5h6v6h-6z" />
      <g stroke="none" fill="#d8dbe0" fontFamily="Liberation Sans" fontSize="12">
        <text x="5" y="11">Y</text>
        <text x="38" y="46">X</text>
      </g>
    </svg>
  </UcsWrap>
);

const Expander = () => (
  <svg width="12" height="12" viewBox="0 0 12 12" fill="none" aria-hidden="true">
    <path d="M3.5 0v13M7 6.5h5" stroke="#ccc" />
    <path d="M1.5 4.5h4v4h-4z" fill="#fff" stroke="#98a0b2" />
    <path d="M2 6.5h3M3.5 5v3" stroke="#445" />
  </svg>
);

const OptionsDialog = () => (
  <Dialog role="dialog" aria-label="选项">
    <DialogTitle>
      <DialogName><Icon name="logo" />选项</DialogName>
      <CloseButton aria-label="close"><Icon name="close" size={7} /></CloseButton>
    </DialogTitle>
    <Client>
      <ProfileRow>
        <span>当前配置:</span>
        <span>&lt;&lt;未命名配置&gt;&gt;</span>
        <Icon name="drawing" />
        <span>当前图形:</span>
        <span>圆图.dwg</span>
      </ProfileRow>
      <TabList role="tablist">
        {dialogTabs.map(([t, w], i) => (
          <TabButton key={t} role="tab" aria-selected={i === 0} $active={i === 0} $w={w}>{t}</TabButton>
        ))}
      </TabList>
      <TabPage role="tabpanel">
        <TreeLabel>搜索路径、文件名和文件位置:</TreeLabel>
        <TreeBox>
          <Tree role="tree">
            {treeItems.map(([icon, text]) => (
              <TreeRow key={text} role="treeitem">
                <Expander />
                <Icon name={icon} size={12} />
                <TreeText $active={text === '自定义文件'}>{text}</TreeText>
              </TreeRow>
            ))}
          </Tree>
          <ScrollBar>
            <ScrollArrow aria-label="up"><Icon name="caretUp" size={5} /></ScrollArrow>
            <Thumb><Grip /></Thumb>
            <Spacer />
            <ScrollArrow aria-label="down"><Icon name="caret" size={5} /></ScrollArrow>
          </ScrollBar>
        </TreeBox>
        <ButtonStack>
          {sideButtons.map((b, i) => <DialogButton key={b} $wide disabled={i > 0}>{b}</DialogButton>)}
        </ButtonStack>
      </TabPage>
      <DialogFooter>
        <DialogButton $primary>确定</DialogButton>
        <DialogButton>取消</DialogButton>
        <DialogButton>应用(A)</DialogButton>
        <DialogButton>帮助(H)</DialogButton>
      </DialogFooter>
    </Client>
  </Dialog>
);

const Annotations = () => (
  <>
    <RedBox />
    <RedText>鼠标右键</RedText>
    <ArrowWrap>
      <svg width="64" height="28" viewBox="0 0 64 28" fill="none" stroke="#b81414" strokeLinecap="round">
        <path d="M59 3L10 20" strokeWidth="4" />
        <path d="M1 22l12-11-1 8 6 6z" fill="#b81414" strokeWidth="1" />
      </svg>
    </ArrowWrap>
  </>
);

const CommandPanel = () => (
  <>
    <LayoutTabs>
      <NavGroup>
        {['first', 'caretLeft', 'caretRight', 'last'].map((n) => (
          <ToolButton key={n} aria-label={n}><Icon name={n} size={6} /></ToolButton>
        ))}
      </NavGroup>
      <LayoutTab $active>模型</LayoutTab>
      <LayoutTab>布局1</LayoutTab>/<LayoutTab>布局2</LayoutTab>/
    </LayoutTabs>
    <CommandArea>
      <CommandSide>
        <Icon name="close" size={7} />
        <Icon name="wrench" />
      </CommandSide>
      <CommandLines>
        <History>命令:</History>
        <CommandLine>
          <Icon name="prompt" />
          <Icon name="caret" size={3} />
          <CommandInput aria-label="命令" defaultValue="_options" />
        </CommandLine>
      </CommandLines>
    </CommandArea>
  </>
);

const BottomBar = () => (
  <>
    <StatusBar>
      <Coords><span>2999.9154,</span><span>1721.8684,</span><span>0.0000</span></Coords>
      <StatusGroup>
        {statusIcons.map(([n, on]) => (
          <StatusButton key={n} $active={on} aria-label={n}><Icon name={n} /></StatusButton>
        ))}
      </StatusGroup>
      <Spacer />
      <StatusRight>
        <StatusButton>模型</StatusButton>
        <StatusButton aria-label="layout"><Icon name="layout" /></StatusButton>
        <StatusButton aria-label="views"><Icon name="views" size={11} /></StatusButton>
        <StatusGap />
        <StatusButton><Icon name="person" />1:1 <Icon name="caret" size={5} /></StatusButton>
        <StatusButton aria-label="scale"><Icon name="personSun" /></StatusButton>
        <StatusButton aria-label="auto"><Icon name="person" /></StatusButton>
        <StatusGap />
        <StatusButton aria-label="gear"><Icon name="gear" /></StatusButton>
      </StatusRight>
    </StatusBar>
    <TaskBar>
      <Task $c="#4d86b0" /><Task $c="#e4f0e6" /><Task $c="#8db8d8" /><Task $c="#f0c8c8" />
      <Task $c="#f4f08a" /><Task $c="#dcecf8" />
    </TaskBar>
  </>
);

const Overlay = () => (
  <>
    <Brand>
      <BrandRow>
        <span>Bai</span>
        <svg width="40" height="50" viewBox="0 0 40 50" fill="#fff" fillOpacity=".8">
          <ellipse cx="5" cy="18" rx="5" ry="7" />
          <ellipse cx="15" cy="8" rx="5" ry="7" />
          <ellipse cx="28" cy="9" rx="5" ry="7" />
          <ellipse cx="36" cy="21" rx="4" ry="6" />
          <path d="M20 19q5 0 9 7 8 7 7 13-2 7-9 6-7-2-14 0-8 0-9-7 0-6 7-11 4-8 9-8z" />
          <text x="11" y="42" fontSize="17" fontWeight="700" fill="#9a9a9a">du</text>
        </svg>
        <BrandTail>经验</BrandTail>
      </BrandRow>
      <BrandUrl>jingyan.baidu.com</BrandUrl>
    </Brand>
    <Badge>82</Badge>
    <ImeBar>
      <svg width="17" height="14" viewBox="0 0 17 14" fill="#f3fbe8" aria-hidden="true">
        <circle cx="4" cy="4" r="3" /><circle cx="8" cy="8" r="3" /><circle cx="4" cy="11" r="3" />
        <circle cx="13" cy="5" r="3" /><circle cx="14" cy="10" r="2" /><circle cx="6" cy="7" r="1" fill="#e8d24c" />
      </svg>
      <span>中</span>
      <svg width="7" height="12" viewBox="0 0 7 12" fill="none" stroke="#fff" aria-hidden="true">
        <path d="M1 2l1 2" /><circle cx="4" cy="8" r="1.5" />
      </svg>
      <span>半</span>
      <span>简</span>
    </ImeBar>
  </>
);

const App = () => (
  <Page>
    <GlobalStyle />
    <TopBar />
    <RibbonBar />
    <Body>
      <PropertiesPalette />
      <Main>
        <Canvas>
          <ViewportLabel>[−][俯视][二维线框]</ViewportLabel>
          <ViewportButtons>
            {['min', 'max', 'close'].map((n) => (
              <ToolButton key={n} aria-label={n}><Icon name={n} size={8} /></ToolButton>
            ))}
          </ViewportButtons>
          <ViewCube />
          <UcsIcon />
          <OptionsDialog />
          <Annotations />
        </Canvas>
        <CommandPanel />
      </Main>
    </Body>
    <BottomBar />
    <Overlay />
  </Page>
);

export default App;
